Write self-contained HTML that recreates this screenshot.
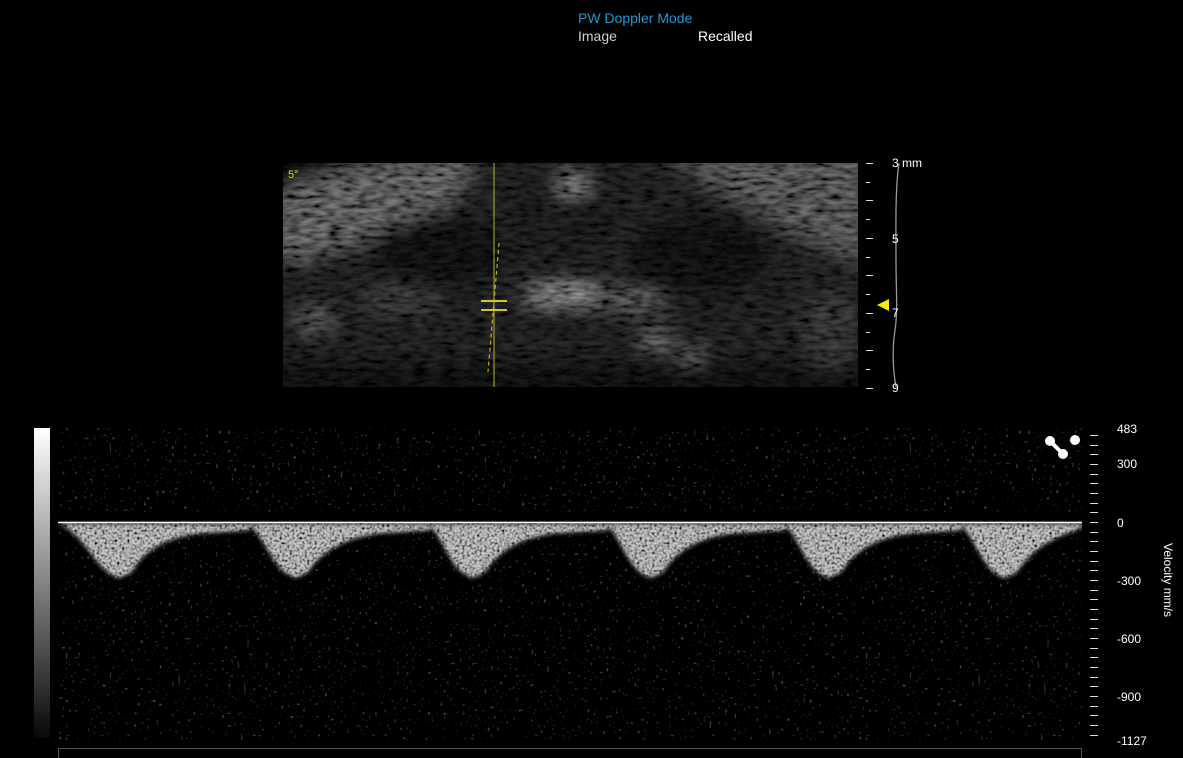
<!DOCTYPE html>
<html><head><meta charset="utf-8"><style>
html,body{margin:0;padding:0;background:#000;width:1183px;height:758px;overflow:hidden;font-family:"Liberation Sans",sans-serif}
.t{position:absolute;font-size:14px;white-space:nowrap}
</style></head><body>
<div class="t" style="left:578px;top:10px;color:#1e9ad6">PW Doppler Mode</div>
<div class="t" style="left:578px;top:28px;color:#cfcfcf">Image</div>
<div class="t" style="left:698px;top:28px;color:#fff">Recalled</div>
<svg width="1183" height="758" style="position:absolute;left:0;top:0" xmlns="http://www.w3.org/2000/svg">
<defs>
<filter id="blur" x="-10%" y="-10%" width="120%" height="120%"><feGaussianBlur stdDeviation="10"/></filter>
<filter id="sp" x="0" y="0" width="100%" height="100%">
<feTurbulence type="fractalNoise" baseFrequency="0.07 0.22" numOctaves="2" seed="5" result="n"/>
<feColorMatrix in="n" type="matrix" values="1.8 0 0 0 -0.35  1.8 0 0 0 -0.35  1.8 0 0 0 -0.35  0 0 0 0 1" result="g"/>
<feComposite in="SourceGraphic" in2="g" operator="arithmetic" k1="1.3" k2="0" k3="0" k4="0"/>
</filter>
<filter id="dn" x="0" y="0" width="100%" height="100%">
<feTurbulence type="fractalNoise" baseFrequency="0.32" numOctaves="1" seed="9" result="n"/>
<feColorMatrix in="n" type="matrix" values="1 0 0 0 0  1 0 0 0 0  1 0 0 0 0  0 0 0 0 1" result="g"/>
<feComponentTransfer in="g"><feFuncR type="table" tableValues="0 0 0 0 0 0.08 0.35"/><feFuncG type="table" tableValues="0 0 0 0 0 0.08 0.35"/><feFuncB type="table" tableValues="0 0 0 0 0 0.08 0.35"/></feComponentTransfer>
</filter>
<filter id="wn" x="0" y="0" width="100%" height="100%">
<feGaussianBlur in="SourceGraphic" stdDeviation="2.5" result="b"/>
<feTurbulence type="fractalNoise" baseFrequency="0.4" numOctaves="1" seed="2" result="n"/>
<feColorMatrix in="n" type="matrix" values="2.6 0 0 0 -0.6  2.6 0 0 0 -0.6  2.6 0 0 0 -0.6  0 0 0 0 1" result="g"/>
<feComposite in="b" in2="g" operator="arithmetic" k1="1.3"/>
</filter>
<linearGradient id="gb" x1="0" y1="0" x2="0" y2="1"><stop offset="0" stop-color="#fff"/><stop offset="1" stop-color="#080808"/></linearGradient>
<clipPath id="bc"><rect x="283" y="163" width="575" height="224"/></clipPath>
<clipPath id="dc"><rect x="58" y="428" width="1024" height="312"/></clipPath>
</defs>
<g clip-path="url(#bc)">
<g filter="url(#sp)">
<g filter="url(#blur)">
<rect x="270" y="150" width="600" height="250" fill="#262626"/>
<polygon points="270,150 350,150 270,200" fill="#000"/>
<polygon points="300,180 420,155 480,155 450,205 380,235 300,260 270,255 270,200" fill="#6a6a6a"/>
<ellipse cx="440" cy="250" rx="70" ry="35" fill="#151515"/>
<polygon points="660,150 870,150 870,270 790,230 710,185" fill="#606060"/>
<ellipse cx="700" cy="255" rx="70" ry="40" fill="#161616"/>
<polygon points="520,175 600,175 620,230 560,270 510,230" fill="#222"/>
<ellipse cx="572" cy="185" rx="15" ry="6" fill="#bbb"/>
<ellipse cx="565" cy="295" rx="40" ry="5" fill="#ccc"/>
<ellipse cx="635" cy="300" rx="30" ry="5" fill="#888"/>
<ellipse cx="655" cy="340" rx="12" ry="5" fill="#aaa"/>
<ellipse cx="690" cy="356" rx="12" ry="4" fill="#999"/>
<ellipse cx="315" cy="320" rx="18" ry="7" fill="#777"/>
<ellipse cx="400" cy="300" rx="40" ry="12" fill="#444"/>
<rect x="270" y="360" width="600" height="40" fill="#141414"/>
<ellipse cx="830" cy="330" rx="30" ry="40" fill="#3a3a3a"/>
</g></g>
<text x="288" y="178" fill="#d6d62a" font-size="11">5°</text>
<line x1="494" y1="163" x2="494" y2="387" stroke="#b8b41c" stroke-width="1"/>
<line x1="499" y1="243" x2="488" y2="372" stroke="#b8b41c" stroke-width="1.2" stroke-dasharray="4,3"/>
<line x1="481" y1="301" x2="507" y2="301" stroke="#cfc82a" stroke-width="2"/>
<line x1="481" y1="310" x2="507" y2="310" stroke="#cfc82a" stroke-width="2"/>
</g>
<g stroke="#ddd" stroke-width="1">
<line x1="866" y1="163.5" x2="873" y2="163.5"/><line x1="866" y1="182.5" x2="870" y2="182.5"/><line x1="866" y1="200.5" x2="873" y2="200.5"/><line x1="866" y1="219.5" x2="870" y2="219.5"/><line x1="866" y1="238.5" x2="873" y2="238.5"/><line x1="866" y1="257.5" x2="870" y2="257.5"/><line x1="866" y1="275.5" x2="873" y2="275.5"/><line x1="866" y1="294.5" x2="870" y2="294.5"/><line x1="866" y1="313.5" x2="873" y2="313.5"/><line x1="866" y1="332.5" x2="870" y2="332.5"/><line x1="866" y1="350.5" x2="873" y2="350.5"/><line x1="866" y1="369.5" x2="870" y2="369.5"/><line x1="866" y1="388.5" x2="873" y2="388.5"/>
</g>
<path d="M899,163 C895,190 896,230 896,260 C896,290 898,310 895,330 C892,350 893,370 896,387" stroke="#999" stroke-width="1.3" fill="none"/>
<polygon points="877,305 889,299 889,311" fill="#f2ee00"/>
<g fill="#fff" font-size="12"><text x="892" y="167">3 mm</text><text x="892" y="243">5</text><text x="892" y="317">7</text><text x="892" y="392">9</text></g>
<rect x="34" y="428" width="16" height="310" fill="url(#gb)"/>
<g clip-path="url(#dc)">
<rect x="58" y="428" width="1024" height="312" fill="#fff" filter="url(#dn)"/>
<rect x="58" y="512" width="1024" height="9" fill="#000"/>
<g filter="url(#wn)">
<rect x="50" y="520" width="1040" height="90" fill="none"/>
<g fill="#b0b0b0">
<path d="M58,524 C80,530 92,560 108,572 L118,578 L132,572 C140,555 160,538 200,533 L250,530 L250,524 Z"/>
<path d="M248,524 C262,533 270,560 285,572 L295,578 L308,572 C318,555 340,538 380,533 L430,530 L430,524 Z"/>
<path d="M428,524 C440,533 448,560 462,572 L472,578 L485,572 C495,555 515,538 555,533 L608,530 L608,524 Z"/>
<path d="M606,524 C618,533 626,560 640,572 L650,578 L663,572 C673,555 693,538 733,533 L786,530 L786,524 Z"/>
<path d="M784,524 C796,533 804,560 818,572 L828,578 L841,572 C851,555 871,538 911,533 L962,530 L962,524 Z"/>
<path d="M960,524 C972,533 980,560 994,572 L1004,578 L1017,572 C1027,555 1047,538 1082,528 L1082,524 Z"/>
</g></g>
<line x1="58" y1="522.5" x2="1082" y2="522.5" stroke="#fff" stroke-width="1.5"/>
</g>
<rect x="58.5" y="748.5" width="1023" height="20" fill="none" stroke="#555"/>
<line x1="1050" y1="441" x2="1063" y2="454" stroke="#fff" stroke-width="4"/>
<circle cx="1050" cy="441" r="5" fill="#fff"/><circle cx="1063" cy="454" r="5" fill="#fff"/><circle cx="1075" cy="440" r="5" fill="#fff"/>
<g stroke="#ddd" stroke-width="1" id="vt"></g>
<g fill="#fff" font-size="12"><text x="1117" y="433">483</text><text x="1117" y="468">300</text><text x="1117" y="527">0</text><text x="1117" y="585">-300</text><text x="1117" y="643">-600</text><text x="1117" y="701">-900</text><text x="1117" y="745">-1127</text></g>
<text transform="translate(1164,543) rotate(90)" fill="#fff" font-size="12">Velocity mm/s</text>
</svg>
<script>
var g=document.getElementById('vt'),s='';
for(var y=522-9.67*10;y<=742;y+=9.67){var yy=Math.round(y)+0.5;if(yy<426)continue;s+='<line x1="1090" y1="'+yy+'" x2="1098" y2="'+yy+'"/>';}
g.innerHTML=s;
</script>
</body></html>
